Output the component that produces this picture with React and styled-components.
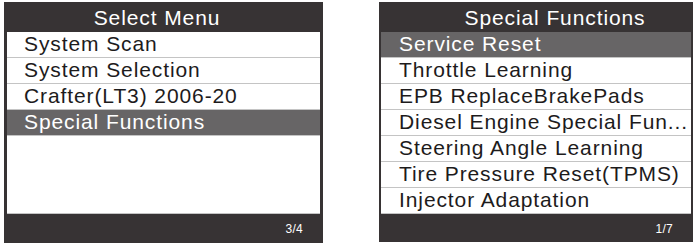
import React from "react"
import styled, { createGlobalStyle } from "styled-components"

const GlobalStyle = createGlobalStyle`
  body {
    margin: 0;
    background: #ffffff;
    font-family: "Liberation Sans", Arial, sans-serif;
  }
`

const Screens = styled.div`
  display: flex;
  align-items: flex-start;
  gap: 56px;
  padding: 2px 0 0 4px;
`

const Panel = styled.div`
  width: ${props => props.width}px;
  height: ${props => props.height}px;
  background: #373334;
  display: flex;
  flex-direction: column;
`

// shift moves the centred title: positive to the right, negative to the left
const Header = styled.div`
  height: 30px;
  flex-shrink: 0;
  line-height: 30px;
  box-sizing: border-box;
  padding: 1px ${props => Math.max(0, -props.shift)}px 0 ${props => Math.max(0, props.shift)}px;
  text-align: center;
  color: #ffffff;
  font-size: 21px;
  letter-spacing: 0.9px;
`

const List = styled.div`
  flex-shrink: 0;
  height: 182px;
  margin: 0 ${props => props.frame}px;
  background: #ffffff;
  display: flex;
  flex-direction: column;
`

const Row = styled.div`
  height: 26px;
  flex-shrink: 0;
  box-sizing: border-box;
  line-height: 23px;
  padding-left: ${props => props.indent}px;
  font-size: 21px;
  letter-spacing: 0.9px;
  white-space: nowrap;
  overflow: hidden;
  color: ${props => (props.active ? "#ffffff" : "#1d1b1c")};
  background: ${props => (props.active ? "#676566" : "transparent")};
  border-bottom: 1px solid #c4c4c4;
`

const Spacer = styled.div`
  flex: 1;
  border-bottom: 1px solid #c4c4c4;
`

const Footer = styled.div`
  flex: 1;
  display: flex;
  justify-content: flex-end;
  align-items: center;
  padding-right: 20px;
  padding-top: 1px;
  box-sizing: border-box;
  color: #ffffff;
  font-size: 12px;
  letter-spacing: 0.3px;
`

const Screen = ({ title, items, active, page, width, height, frame, shift }) => (
  <Panel width={width} height={height}>
    <Header shift={shift}>{title}</Header>
    <List frame={frame}>
      {items.map((item, i) => (
        <Row key={item} active={i === active} indent={20 - frame}>
          {item}
        </Row>
      ))}
      {items.length < 7 && <Spacer />}
    </List>
    <Footer>{page}</Footer>
  </Panel>
)

export default function App() {
  return (
    <>
      <GlobalStyle />
      <Screens>
        <Screen
          title="Select Menu"
          items={["System Scan", "System Selection", "Crafter(LT3) 2006-20", "Special Functions"]}
          active={3}
          page="3/4"
          width={319}
          height={241}
          frame={3}
          shift={-13}
        />
        <Screen
          title="Special Functions"
          items={[
            "Service Reset",
            "Throttle Learning",
            "EPB ReplaceBrakePads",
            "Diesel Engine Special Fun...",
            "Steering Angle Learning",
            "Tire Pressure Reset(TPMS)",
            "Injector Adaptation",
          ]}
          active={0}
          page="1/7"
          width={314}
          height={240}
          frame={2}
          shift={38}
        />
      </Screens>
    </>
  )
}
